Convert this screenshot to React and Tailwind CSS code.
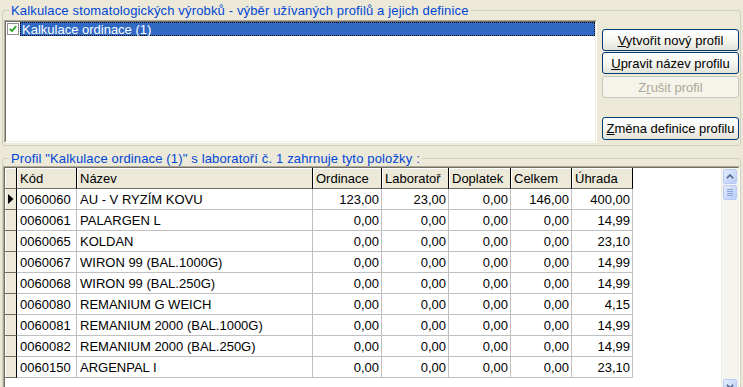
import React from "react";

const cols = [
  { key: "kod", label: "Kód", w: "w-[60px]" },
  { key: "nazev", label: "Název", w: "w-[236px]" },
  { key: "ord", label: "Ordinace", w: "w-[69px]", num: true },
  { key: "lab", label: "Laboratoř", w: "w-[67px]", num: true },
  { key: "dop", label: "Doplatek", w: "w-[62px]", num: true },
  { key: "cel", label: "Celkem", w: "w-[61px]", num: true },
  { key: "uhr", label: "Úhrada", w: "w-[61px]", num: true },
];

const rows = [
  { kod: "0060060", nazev: "AU - V RYZÍM KOVU", ord: "123,00", lab: "23,00", dop: "0,00", cel: "146,00", uhr: "400,00" },
  { kod: "0060061", nazev: "PALARGEN L", ord: "0,00", lab: "0,00", dop: "0,00", cel: "0,00", uhr: "14,99" },
  { kod: "0060065", nazev: "KOLDAN", ord: "0,00", lab: "0,00", dop: "0,00", cel: "0,00", uhr: "23,10" },
  { kod: "0060067", nazev: "WIRON 99 (BAL.1000G)", ord: "0,00", lab: "0,00", dop: "0,00", cel: "0,00", uhr: "14,99" },
  { kod: "0060068", nazev: "WIRON 99 (BAL.250G)", ord: "0,00", lab: "0,00", dop: "0,00", cel: "0,00", uhr: "14,99" },
  { kod: "0060080", nazev: "REMANIUM G WEICH", ord: "0,00", lab: "0,00", dop: "0,00", cel: "0,00", uhr: "4,15" },
  { kod: "0060081", nazev: "REMANIUM 2000 (BAL.1000G)", ord: "0,00", lab: "0,00", dop: "0,00", cel: "0,00", uhr: "14,99" },
  { kod: "0060082", nazev: "REMANIUM 2000 (BAL.250G)", ord: "0,00", lab: "0,00", dop: "0,00", cel: "0,00", uhr: "14,99" },
  { kod: "0060150", nazev: "ARGENPAL I", ord: "0,00", lab: "0,00", dop: "0,00", cel: "0,00", uhr: "23,10" },
];

function XpButton({ children, disabled, className = "" }) {
  return (
    <button
      className={`w-[137px] rounded-[3px] border flex items-center justify-center ${
        disabled
          ? "border-[#c9c7ba] bg-[#f5f4ea] text-[#aca899]"
          : "border-[#003c74] bg-linear-to-b from-white via-[#f6f6f2] to-[#e3e2d8] text-black"
      } ${className}`}
    >
      {children}
    </button>
  );
}

function Chevron({ down }) {
  return (
    <svg width="8" height="5" viewBox="0 0 8 5" className={down ? "rotate-180" : ""}>
      <polyline points="0.8,4.2 4,1 7.2,4.2" fill="none" stroke="#4d6185" strokeWidth="1.6" />
    </svg>
  );
}

function ScrollBox({ children }) {
  return (
    <div className="h-[15px] rounded-[2px] border border-[#b7cbf6] bg-linear-to-br from-[#e4ecfd] to-[#b9cdf8] flex items-center justify-center">
      {children}
    </div>
  );
}

function Scrollbar() {
  return (
    <div className="w-[17px] shrink-0 bg-[#f5f4ef] border-l border-[#eeede5] flex flex-col p-[1px]">
      <ScrollBox>
        <Chevron />
      </ScrollBox>
      <div className="mt-[1px]">
        <ScrollBox>
          <div className="flex flex-col gap-[1px]">
            <div className="w-[6px] h-px bg-[#8ca5dc]" />
            <div className="w-[6px] h-px bg-[#8ca5dc]" />
            <div className="w-[6px] h-px bg-[#8ca5dc]" />
            <div className="w-[6px] h-px bg-[#8ca5dc]" />
          </div>
        </ScrollBox>
      </div>
      <div className="flex-1" />
      <ScrollBox>
        <Chevron down />
      </ScrollBox>
    </div>
  );
}

function HeaderRow() {
  return (
    <div className="flex h-[21px]">
      <div className="w-[12px] shrink-0 bg-[#ece9d8] border-r border-b border-r-black border-b-[#716f64] shadow-[inset_1px_1px_0_#fff]" />
      {cols.map((c) => (
        <div
          key={c.key}
          className={`${c.w} shrink-0 bg-[#ece9d8] border-r border-b border-r-black border-b-[#716f64] shadow-[inset_1px_1px_0_#fff] pl-[3px] flex items-center whitespace-nowrap overflow-hidden`}
        >
          {c.label}
        </div>
      ))}
    </div>
  );
}

function DataRow({ r, current }) {
  return (
    <div className="flex h-[21px]">
      <div className="w-[12px] shrink-0 bg-[#ece9d8] border-r border-b border-r-black border-b-[#716f64] shadow-[inset_1px_0_0_#fff] flex items-center justify-center">
        {current && (
          <svg width="6" height="10" viewBox="0 0 6 10">
            <polygon points="0,0 5.5,5 0,10" fill="#000" />
          </svg>
        )}
      </div>
      {cols.map((c) => (
        <div
          key={c.key}
          className={`${c.w} shrink-0 border-r border-b border-[#c0c0c0] flex items-center whitespace-nowrap overflow-hidden ${
            c.num ? "justify-end pr-[2px]" : "pl-[3px]"
          }`}
        >
          {r[c.key]}
        </div>
      ))}
    </div>
  );
}

export default function App() {
  return (
    <div className="w-[743px] h-[387px] overflow-hidden bg-[#ece9d8] px-[2px] pt-[3px] font-['Liberation_Sans',Arial,sans-serif] text-[13px] leading-[15px] text-black">
      <fieldset className="border border-[#d0d0bf] rounded-[3px]">
        <legend className="ml-[6px] px-[2px] text-[#0046d5] leading-[15px] tracking-[0.15px]">
          Kalkulace stomatologických výrobků - výběr užívaných profilů a jejich definice
        </legend>
        <div className="flex h-[127px] px-[1px] gap-[5px]">
          <div className="mt-[2px] h-[123px] flex-1 border border-t-[#aca899] border-l-[#aca899] border-r-white border-b-white">
            <div className="h-full bg-white border border-t-[#716f64] border-l-[#716f64] border-r-[#f1efe2] border-b-[#f1efe2]">
              <div className="flex items-center h-[14px]">
                <div className="ml-[1px] w-[12px] h-[12px] border border-[#8f8f8f] bg-white flex items-center justify-center">
                  <svg width="8" height="8" viewBox="0 0 8 8">
                    <polyline points="0.8,3.8 3,6 7.2,1.2" fill="none" stroke="#21a121" strokeWidth="1.8" />
                  </svg>
                </div>
                <div className="ml-[1px] flex-1 h-[14px] bg-[#316ac5] border border-dotted border-black text-white pl-[1px] flex items-center">
                  Kalkulace ordinace (1)
                </div>
              </div>
            </div>
          </div>
          <div className="w-[137px] flex flex-col pt-[11px]">
            <XpButton className="h-[22px]">
              <span>
                <span className="underline">V</span>ytvořit nový profil
              </span>
            </XpButton>
            <XpButton className="h-[22px] mt-[1px]">
              <span>
                <span className="underline">U</span>pravit název profilu
              </span>
            </XpButton>
            <XpButton disabled className="h-[22px] mt-[2px]">
              <span>
                Z<span className="underline">r</span>ušit profil
              </span>
            </XpButton>
            <XpButton className="h-[23px] mt-[19px]">
              <span>
                <span className="underline">Z</span>měna definice profilu
              </span>
            </XpButton>
          </div>
        </div>
      </fieldset>

      <fieldset className="mt-[5px] border border-[#d0d0bf] rounded-[3px]">
        <legend className="ml-[6px] px-[2px] text-[#0046d5] leading-[15px] tracking-[0.15px]">
          Profil "Kalkulace ordinace (1)" s laboratoří č. 1 zahrnuje tyto položky :
        </legend>
        <div className="h-[231px] border border-t-[#aca899] border-l-[#aca899] border-r-white border-b-white">
          <div className="h-full flex bg-white border border-t-[#716f64] border-l-[#716f64] border-r-[#f1efe2] border-b-[#f1efe2]">
            <div className="flex-1 overflow-hidden">
              <HeaderRow />
              {rows.map((r, i) => (
                <DataRow key={r.kod} r={r} current={i === 0} />
              ))}
            </div>
            <Scrollbar />
          </div>
        </div>
      </fieldset>
    </div>
  );
}
